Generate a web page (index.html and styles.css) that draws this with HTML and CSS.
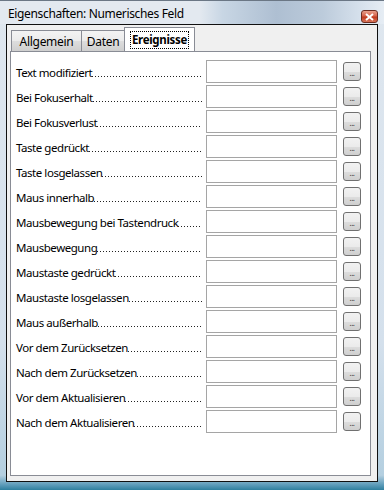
FILE: index.html
```html
<!DOCTYPE html>
<html lang="de">
<head>
  <meta charset="UTF-8">
  <title>Eigenschaften: Numerisches Feld</title>
  <link rel="stylesheet" href="styles.css">
</head>
<body>
  <div class="fenster">
    <div class="titelleiste">
      <span class="titel">Eigenschaften: Numerisches Feld</span>
      <button class="schliessen" title="Schließen">
        <svg width="9" height="8" viewBox="0 0 9 8"><path d="M1 1 L8 7 M8 1 L1 7" stroke="#fff" stroke-width="2"/></svg>
      </button>
    </div>
    <div class="inhalt">
      <div class="reiter">
        <div class="reiter-tab breit">Allgemein</div>
        <div class="reiter-tab schmal">Daten</div>
        <div class="reiter-tab aktiv"><span class="fokus">Ereignisse</span></div>
      </div>
      <div class="seite">
        <div class="zeile"><label><span>Text modifiziert</span><i class="punkte"></i></label><input type="text"><button class="mehr">...</button></div>
        <div class="zeile"><label><span>Bei Fokuserhalt</span><i class="punkte"></i></label><input type="text"><button class="mehr">...</button></div>
        <div class="zeile"><label><span>Bei Fokusverlust</span><i class="punkte"></i></label><input type="text"><button class="mehr">...</button></div>
        <div class="zeile"><label><span>Taste gedrückt</span><i class="punkte"></i></label><input type="text"><button class="mehr">...</button></div>
        <div class="zeile"><label><span>Taste losgelassen</span><i class="punkte"></i></label><input type="text"><button class="mehr">...</button></div>
        <div class="zeile"><label><span>Maus innerhalb</span><i class="punkte"></i></label><input type="text"><button class="mehr">...</button></div>
        <div class="zeile"><label><span>Mausbewegung bei Tastendruck</span><i class="punkte"></i></label><input type="text"><button class="mehr">...</button></div>
        <div class="zeile"><label><span>Mausbewegung</span><i class="punkte"></i></label><input type="text"><button class="mehr">...</button></div>
        <div class="zeile"><label><span>Maustaste gedrückt</span><i class="punkte"></i></label><input type="text"><button class="mehr">...</button></div>
        <div class="zeile"><label><span>Maustaste losgelassen</span><i class="punkte"></i></label><input type="text"><button class="mehr">...</button></div>
        <div class="zeile"><label><span>Maus außerhalb</span><i class="punkte"></i></label><input type="text"><button class="mehr">...</button></div>
        <div class="zeile"><label><span>Vor dem Zurücksetzen</span><i class="punkte"></i></label><input type="text"><button class="mehr">...</button></div>
        <div class="zeile"><label><span>Nach dem Zurücksetzen</span><i class="punkte"></i></label><input type="text"><button class="mehr">...</button></div>
        <div class="zeile"><label><span>Vor dem Aktualisieren</span><i class="punkte"></i></label><input type="text"><button class="mehr">...</button></div>
        <div class="zeile"><label><span>Nach dem Aktualisieren</span><i class="punkte"></i></label><input type="text"><button class="mehr">...</button></div>
      </div>
    </div>
  </div>
</body>
</html>
```

FILE: styles.css
```css
* { box-sizing: border-box; }
body { margin: 0; font-family: "Noto Sans", "Open Sans", sans-serif; font-size: 11px; color: #000; }

.fenster {
  width: 384px; height: 490px;
  padding: 0 6px 0 6px;
  border-top: 1px solid #6b7785;
  background: linear-gradient(to bottom, #dfe7ef 0%, #d4e0ec 70%, #b4cfe0 97%, #5b9ab8 99%, #2f7f9e 100%);
}
.titelleiste {
  height: 23px;
  display: flex; justify-content: space-between;
  margin: 0 -6px; padding: 5px 6px 0 8px;
  background: linear-gradient(to right, #e3e9f0 0%, #e3e9f0 52%, #c8d6e4 58%, #aebfd2 72%, #bccbdb 84%, #d9e3ee 95%, #e6edf4 100%);
}
.titel { font-size: 12px; line-height: 16px; letter-spacing: -0.35px; }
.schliessen {
  width: 17px; height: 13px; padding: 0; margin-top: 4px;
  border: 1px solid #6d2d22; border-radius: 3px;
  background: linear-gradient(to bottom, #e9a08d 0%, #d5624a 45%, #c0391e 55%, #d8755a 100%);
  display: flex; align-items: center; justify-content: center;
}

.inhalt {
  height: 458px;
  display: flex; flex-direction: column;
  border: 1px solid #101010;
  background: #f0f0f0;
  padding: 2px 6px 5px 3px;
}
.reiter { display: flex; height: 24px; align-items: flex-end; padding-left: 1px; }
.reiter-tab {
  height: 21px; padding-top: 1px;
  display: flex; align-items: center; justify-content: center;
  border: 1px solid #898c95; border-bottom: none; margin-right: -1px;
  background: linear-gradient(to bottom, #f3f3f3 0%, #ebebeb 50%, #dddddd 51%, #cfcfcf 100%);
  font-size: 12px; letter-spacing: -0.3px;
}
.reiter-tab.breit { width: 71px; }
.reiter-tab.schmal { width: 44px; }
.reiter-tab.aktiv {
  width: 71px; height: 25px; margin-bottom: -1px; padding-top: 0;
  background: #fff; font-weight: bold; font-size: 11.5px; letter-spacing: -0.3px;
}
.fokus { outline: 1px dotted #000; padding: 0 1px; line-height: 16px; }

.seite {
  flex: 1;
  background: #fff;
  border: 1px solid #898c95;
  padding: 8px 9px 0 5px;
  display: flex; flex-direction: column; gap: 2px;
}
.zeile { display: flex; align-items: center; height: 23px; }
.zeile label {
  width: 190px; padding: 1px 4px 0 0;
  display: flex; align-items: baseline; white-space: nowrap;
  font-size: 11.5px; letter-spacing: -0.45px;
}
.punkte {
  flex: 1; height: 1px;
  background: linear-gradient(to right, #222 0 1px, transparent 1px 3px);
  background-size: 3px 1px;
}
.zeile input {
  width: 131px; height: 23px; margin: 0;
  border: 1px solid #a5a5a5; background: #fff;
}
.mehr {
  width: 18px; height: 19px; margin: 0 0 0 6px; padding: 0 0 3px 0;
  border: 1px solid #707070; border-radius: 3px;
  background: linear-gradient(to bottom, #f2f2f2 0%, #ebebeb 50%, #dddddd 51%, #cfcfcf 100%);
  color: #333; font-family: "Noto Sans", sans-serif; font-size: 8px; line-height: 8px; letter-spacing: -0.5px;
  display: flex; align-items: flex-end; justify-content: center;
}
```
